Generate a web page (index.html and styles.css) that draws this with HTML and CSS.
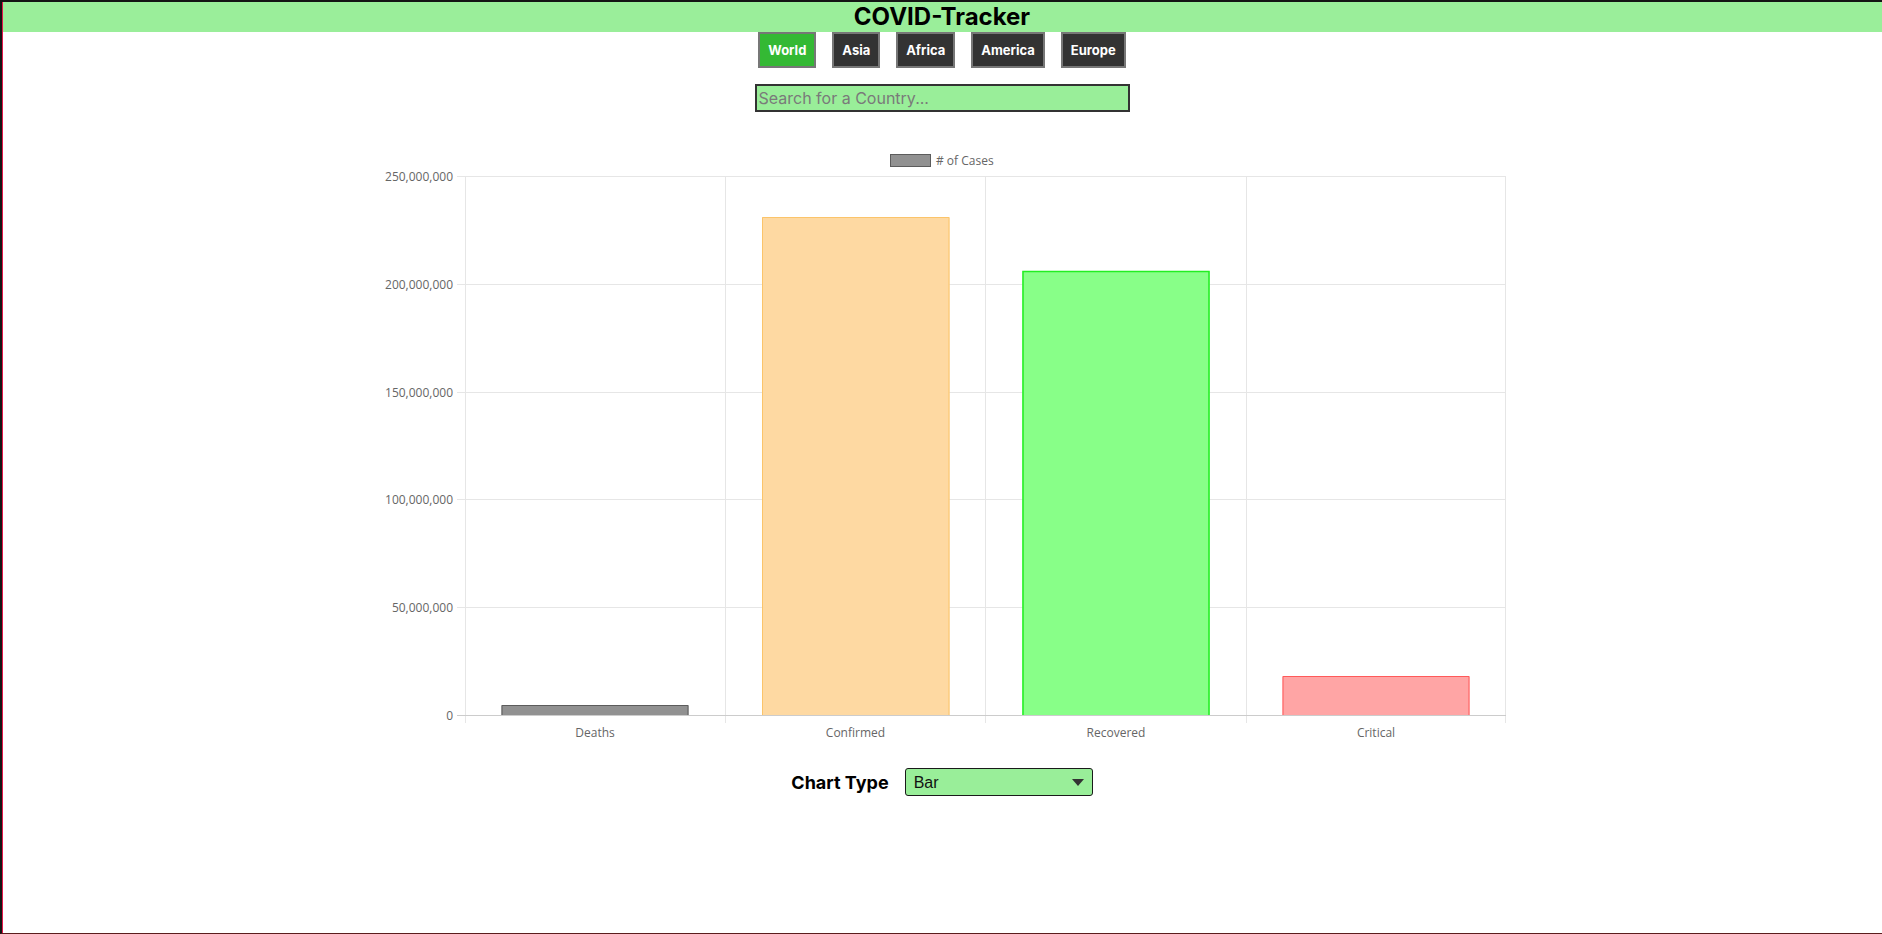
FILE: index.html
```html
<!DOCTYPE html>
<html lang="en">
<head>
<meta charset="utf-8">
<title>COVID-Tracker</title>
<link rel="stylesheet" href="styles.css">
</head>
<body>
<div class="frame">
  <div class="page">
    <header class="header">
      <h1 class="title">COVID-Tracker</h1>
    </header>
    <nav class="regions">
      <button class="region active">World</button>
      <button class="region">Asia</button>
      <button class="region">Africa</button>
      <button class="region">America</button>
      <button class="region">Europe</button>
    </nav>
    <div class="search-row">
      <input class="search" type="text" placeholder="Search for a Country...">
    </div>
    <div class="chart-wrap">
      <svg class="chart" width="1130" height="608" viewBox="0 0 1130 608">
        <!-- legend -->
        <rect x="513.5" y="10.5" width="40" height="12" fill="#919191" stroke="#5c5c5c" stroke-width="1"/>
        <text class="lbl" x="559" y="20.5"># of Cases</text>
        <!-- grid -->
        <g stroke="#e6e6e6" stroke-width="1">
          <line x1="80" y1="32.5" x2="1129" y2="32.5"/>
          <line x1="80" y1="140.5" x2="1129" y2="140.5"/>
          <line x1="80" y1="248.5" x2="1129" y2="248.5"/>
          <line x1="80" y1="355.5" x2="1129" y2="355.5"/>
          <line x1="80" y1="463.5" x2="1129" y2="463.5"/>
          <line x1="88.5" y1="32" x2="88.5" y2="579"/>
          <line x1="348.5" y1="32" x2="348.5" y2="579"/>
          <line x1="608.5" y1="32" x2="608.5" y2="579"/>
          <line x1="869.5" y1="32" x2="869.5" y2="579"/>
          <line x1="1128.5" y1="32" x2="1128.5" y2="579"/>
        </g>
        <line x1="80" y1="571.5" x2="1129" y2="571.5" stroke="#cccccc" stroke-width="1"/>
        <!-- y labels -->
        <text class="lbl" x="76" y="36.5" text-anchor="end">250,000,000</text>
        <text class="lbl" x="76" y="144.5" text-anchor="end">200,000,000</text>
        <text class="lbl" x="76" y="252.5" text-anchor="end">150,000,000</text>
        <text class="lbl" x="76" y="359.5" text-anchor="end">100,000,000</text>
        <text class="lbl" x="76" y="467.5" text-anchor="end">50,000,000</text>
        <text class="lbl" x="76" y="575.5" text-anchor="end">0</text>
        <!-- bars -->
        <rect x="124.5" y="561" width="187" height="10" fill="#919191"/>
        <path d="M125 571 V561.5 H311 V571" fill="none" stroke="#5c5c5c" stroke-width="1"/>
        <rect x="385" y="73" width="187.5" height="498" fill="#fed9a2"/>
        <path d="M385.5 571 V73.5 H572 V571" fill="none" stroke="#fbc46a" stroke-width="1"/>
        <rect x="645.5" y="127" width="187" height="444" fill="#88ff88"/>
        <path d="M646 571 V127.5 H832 V571" fill="none" stroke="#22ee22" stroke-width="1.5"/>
        <rect x="905.5" y="532" width="187" height="39" fill="#ffa5a5"/>
        <path d="M906 571 V532.5 H1092 V571" fill="none" stroke="#ff5a5a" stroke-width="1"/>
        <!-- x labels -->
        <text class="lbl" x="218" y="593" text-anchor="middle">Deaths</text>
        <text class="lbl" x="478.5" y="593" text-anchor="middle">Confirmed</text>
        <text class="lbl" x="739" y="593" text-anchor="middle">Recovered</text>
        <text class="lbl" x="999" y="593" text-anchor="middle">Critical</text>
      </svg>
    </div>
    <div class="type-row">
      <label class="type-label" for="chartType">Chart Type</label>
      <div class="select-wrap">
        <select id="chartType" class="type-select">
          <option>Bar</option>
          <option>Line</option>
          <option>Pie</option>
        </select>
        <span class="caret"></span>
      </div>
    </div>
  </div>
</div>
</body>
</html>
```

FILE: styles.css
```css
html, body {
  margin: 0;
  padding: 0;
  background: #ffffff;
}

body {
  font-family: Inter, "Noto Sans", sans-serif;
  color: #000;
}

.frame {
  position: relative;
  box-sizing: border-box;
  height: 934px;
}

.frame::after {
  content: "";
  position: absolute;
  inset: 0;
  border-top: 2px solid #141414;
  border-left: 2px solid #141414;
  border-bottom: 1px solid #5a1d1d;
  box-shadow: inset 1px 0 0 #e3164a;
  pointer-events: none;
}

.page {
  box-sizing: border-box;
  height: 100%;
  padding-top: 2px;
  padding-left: 2px;
  display: flex;
  flex-direction: column;
  align-items: center;
}

.header {
  align-self: stretch;
  margin-left: -2px;
  height: 30px;
  background: #9aee9a;
  display: flex;
  justify-content: center;
  align-items: center;
  padding-left: 2px;
}

.title {
  margin: 0;
  font-size: 24px;
  font-weight: 700;
  line-height: 30px;
}

.regions {
  display: flex;
  justify-content: center;
}

.region {
  box-sizing: border-box;
  height: 36px;
  margin: 0 8px;
  padding: 0 8px;
  border: 2px solid #777777;
  background: #333333;
  color: #ffffff;
  font-family: Inter, "Noto Sans", sans-serif;
  font-size: 13px;
  font-weight: 700;
  cursor: pointer;
}

.region.active {
  background: #34b934;
}

.search-row {
  margin-top: 16px;
  display: flex;
  justify-content: center;
}

.search {
  box-sizing: border-box;
  width: 375px;
  height: 28px;
  padding: 0 2px;
  border: 2px solid #333333;
  background: #99ee99;
  font-family: Inter, "Noto Sans", sans-serif;
  font-size: 16px;
  outline: none;
}

.search::placeholder {
  color: #7a7a7a;
}

.chart-wrap {
  margin-top: 32px;
  display: flex;
  justify-content: center;
}

.chart {
  display: block;
}

.lbl {
  font-family: "Open Sans", "Liberation Sans", sans-serif;
  font-size: 12px;
  fill: #666666;
}

.type-row {
  margin-top: 16px;
  display: flex;
  align-items: center;
  gap: 16px;
}

.type-label {
  font-size: 18px;
  font-weight: 700;
}

.select-wrap {
  position: relative;
}

.type-select {
  box-sizing: border-box;
  width: 188px;
  height: 28px;
  padding: 0 8px;
  border: 1px solid #1a1a1a;
  border-radius: 3px;
  background: #99ee99;
  font-family: "Liberation Sans", Arial, sans-serif;
  font-size: 16px;
  color: #111;
  -webkit-appearance: none;
  appearance: none;
}

.caret {
  position: absolute;
  right: 9px;
  top: 11px;
  width: 0;
  height: 0;
  border-left: 6px solid transparent;
  border-right: 6px solid transparent;
  border-top: 7px solid #333333;
  pointer-events: none;
}
```
